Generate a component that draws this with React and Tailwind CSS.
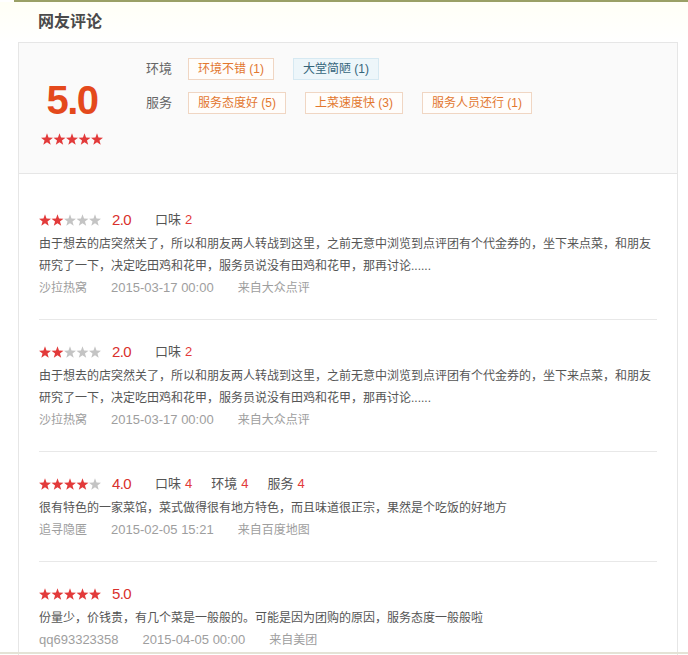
import React from 'react';

const STAR = '6,0.3 7.53,4.5 12,4.65 8.47,7.4 9.7,11.7 6,9.2 2.3,11.7 3.53,7.4 0,4.65 4.47,4.5';

function Stars({ count }) {
  return (
    <svg width="62" height="12" viewBox="0 0 62 12" className="block shrink-0">
      {[0, 1, 2, 3, 4].map((i) => (
        <polygon
          key={i}
          points={STAR}
          transform={`translate(${i * 12.5} 0)`}
          fill={i < count ? '#e23a3a' : '#c4c4c4'}
        />
      ))}
    </svg>
  );
}

const reviews = [
  {
    stars: 2,
    score: '2.0',
    subs: [['口味', 2]],
    text: '由于想去的店突然关了，所以和朋友两人转战到这里，之前无意中浏览到点评团有个代金券的，坐下来点菜，和朋友研究了一下，决定吃田鸡和花甲，服务员说没有田鸡和花甲，那再讨论......',
    user: '沙拉热窝',
    userLatin: false,
    date: '2015-03-17 00:00',
    source: '来自大众点评',
  },
  {
    stars: 2,
    score: '2.0',
    subs: [['口味', 2]],
    text: '由于想去的店突然关了，所以和朋友两人转战到这里，之前无意中浏览到点评团有个代金券的，坐下来点菜，和朋友研究了一下，决定吃田鸡和花甲，服务员说没有田鸡和花甲，那再讨论......',
    user: '沙拉热窝',
    userLatin: false,
    date: '2015-03-17 00:00',
    source: '来自大众点评',
  },
  {
    stars: 4,
    score: '4.0',
    subs: [['口味', 4], ['环境', 4], ['服务', 4]],
    text: '很有特色的一家菜馆，菜式做得很有地方特色，而且味道很正宗，果然是个吃饭的好地方',
    user: '追寻隐匿',
    userLatin: false,
    date: '2015-02-05 15:21',
    source: '来自百度地图',
  },
  {
    stars: 5,
    score: '5.0',
    subs: [],
    text: '份量少，价钱贵，有几个菜是一般般的。可能是因为团购的原因，服务态度一般般啦',
    user: 'qq693323358',
    userLatin: true,
    date: '2015-04-05 00:00',
    source: '来自美团',
  },
];

function Tag({ children, blue }) {
  return (
    <span
      className={
        blue
          ? 'h-[22px] px-[9px] border border-[#d6e9f2] bg-[#edf6fa] text-[#35657a] text-[12px] leading-[20px] whitespace-nowrap'
          : 'h-[22px] px-[9px] border border-[#f0d6c3] bg-[#fffdfb] text-[#e2772f] text-[12px] leading-[20px] whitespace-nowrap'
      }
    >
      {children}
    </span>
  );
}

export default function App() {
  return (
    <div className="h-[655px] overflow-hidden bg-white font-['Liberation_Sans','Noto_Sans_CJK_SC',sans-serif] relative">
      {/* top bar */}
      <div className="ml-[14px] h-[2px] bg-[#9aa066]" />
      <div className="h-[40px] flex items-center pl-[38px] bg-gradient-to-b from-[#fffff6] to-white">
        <h2 className="text-[16px] font-bold text-[#4a4a4a] leading-[24px]">网友评论</h2>
      </div>

      <div className="ml-[18px] w-[660px] border border-[#e6e6e6]">
        {/* summary */}
        <div className="h-[131px] bg-[#fafafa] border-b border-[#e6e6e6] flex px-[20px] pt-[15px]">
          <div className="w-[66px] mt-[22px] flex flex-col items-center">
            <div className="text-[40px] leading-[40px] font-bold tracking-[-1.5px] text-[#e4491c]">5.0</div>
            <div className="mt-[13px]">
              <Stars count={5} />
            </div>
          </div>
          <div className="ml-[41px] flex flex-col gap-[12px]">
            <div className="flex items-center">
              <span className="w-[42px] text-[13px] text-[#666]">环境</span>
              <div className="flex gap-[19px]">
                <Tag>环境不错 (1)</Tag>
                <Tag blue>大堂简陋 (1)</Tag>
              </div>
            </div>
            <div className="flex items-center">
              <span className="w-[42px] text-[13px] text-[#666]">服务</span>
              <div className="flex gap-[19px]">
                <Tag>服务态度好 (5)</Tag>
                <Tag>上菜速度快 (3)</Tag>
                <Tag>服务人员还行 (1)</Tag>
              </div>
            </div>
          </div>
        </div>

        {/* review list */}
        <div className="px-[20px] pt-[14px]">
          {reviews.map((r, idx) => (
            <div key={idx} className="pt-[21px] pb-[20px] border-b border-[#e8e8e8]">
              <div className="h-[22px] flex items-center">
                <Stars count={r.stars} />
                <span className="ml-[11px] text-[15px] tracking-[-0.6px] text-[#d9302d] leading-[22px]">{r.score}</span>
                <div className="ml-[24px] flex gap-[19px]">
                  {r.subs.map(([k, v]) => (
                    <span key={k} className="text-[13px] text-[#555] leading-[22px]">
                      {k}
                      <span className="ml-[4px] text-[#e23a3a]">{v}</span>
                    </span>
                  ))}
                </div>
              </div>
              <p className="mt-[2px] text-[12px] leading-[22px] text-[#555]">{r.text}</p>
              <div className="h-[22px] flex items-center gap-[24px] text-[#9e9e9e]">
                <span className={r.userLatin ? 'text-[13px]' : 'text-[12px]'}>{r.user}</span>
                <span className="text-[13px]">{r.date}</span>
                <span className="text-[12px]">{r.source}</span>
              </div>
            </div>
          ))}
        </div>
      </div>

      <div className="absolute left-0 right-0 bottom-[1px] h-[2px] bg-[#e4e3d6]" />
    </div>
  );
}
